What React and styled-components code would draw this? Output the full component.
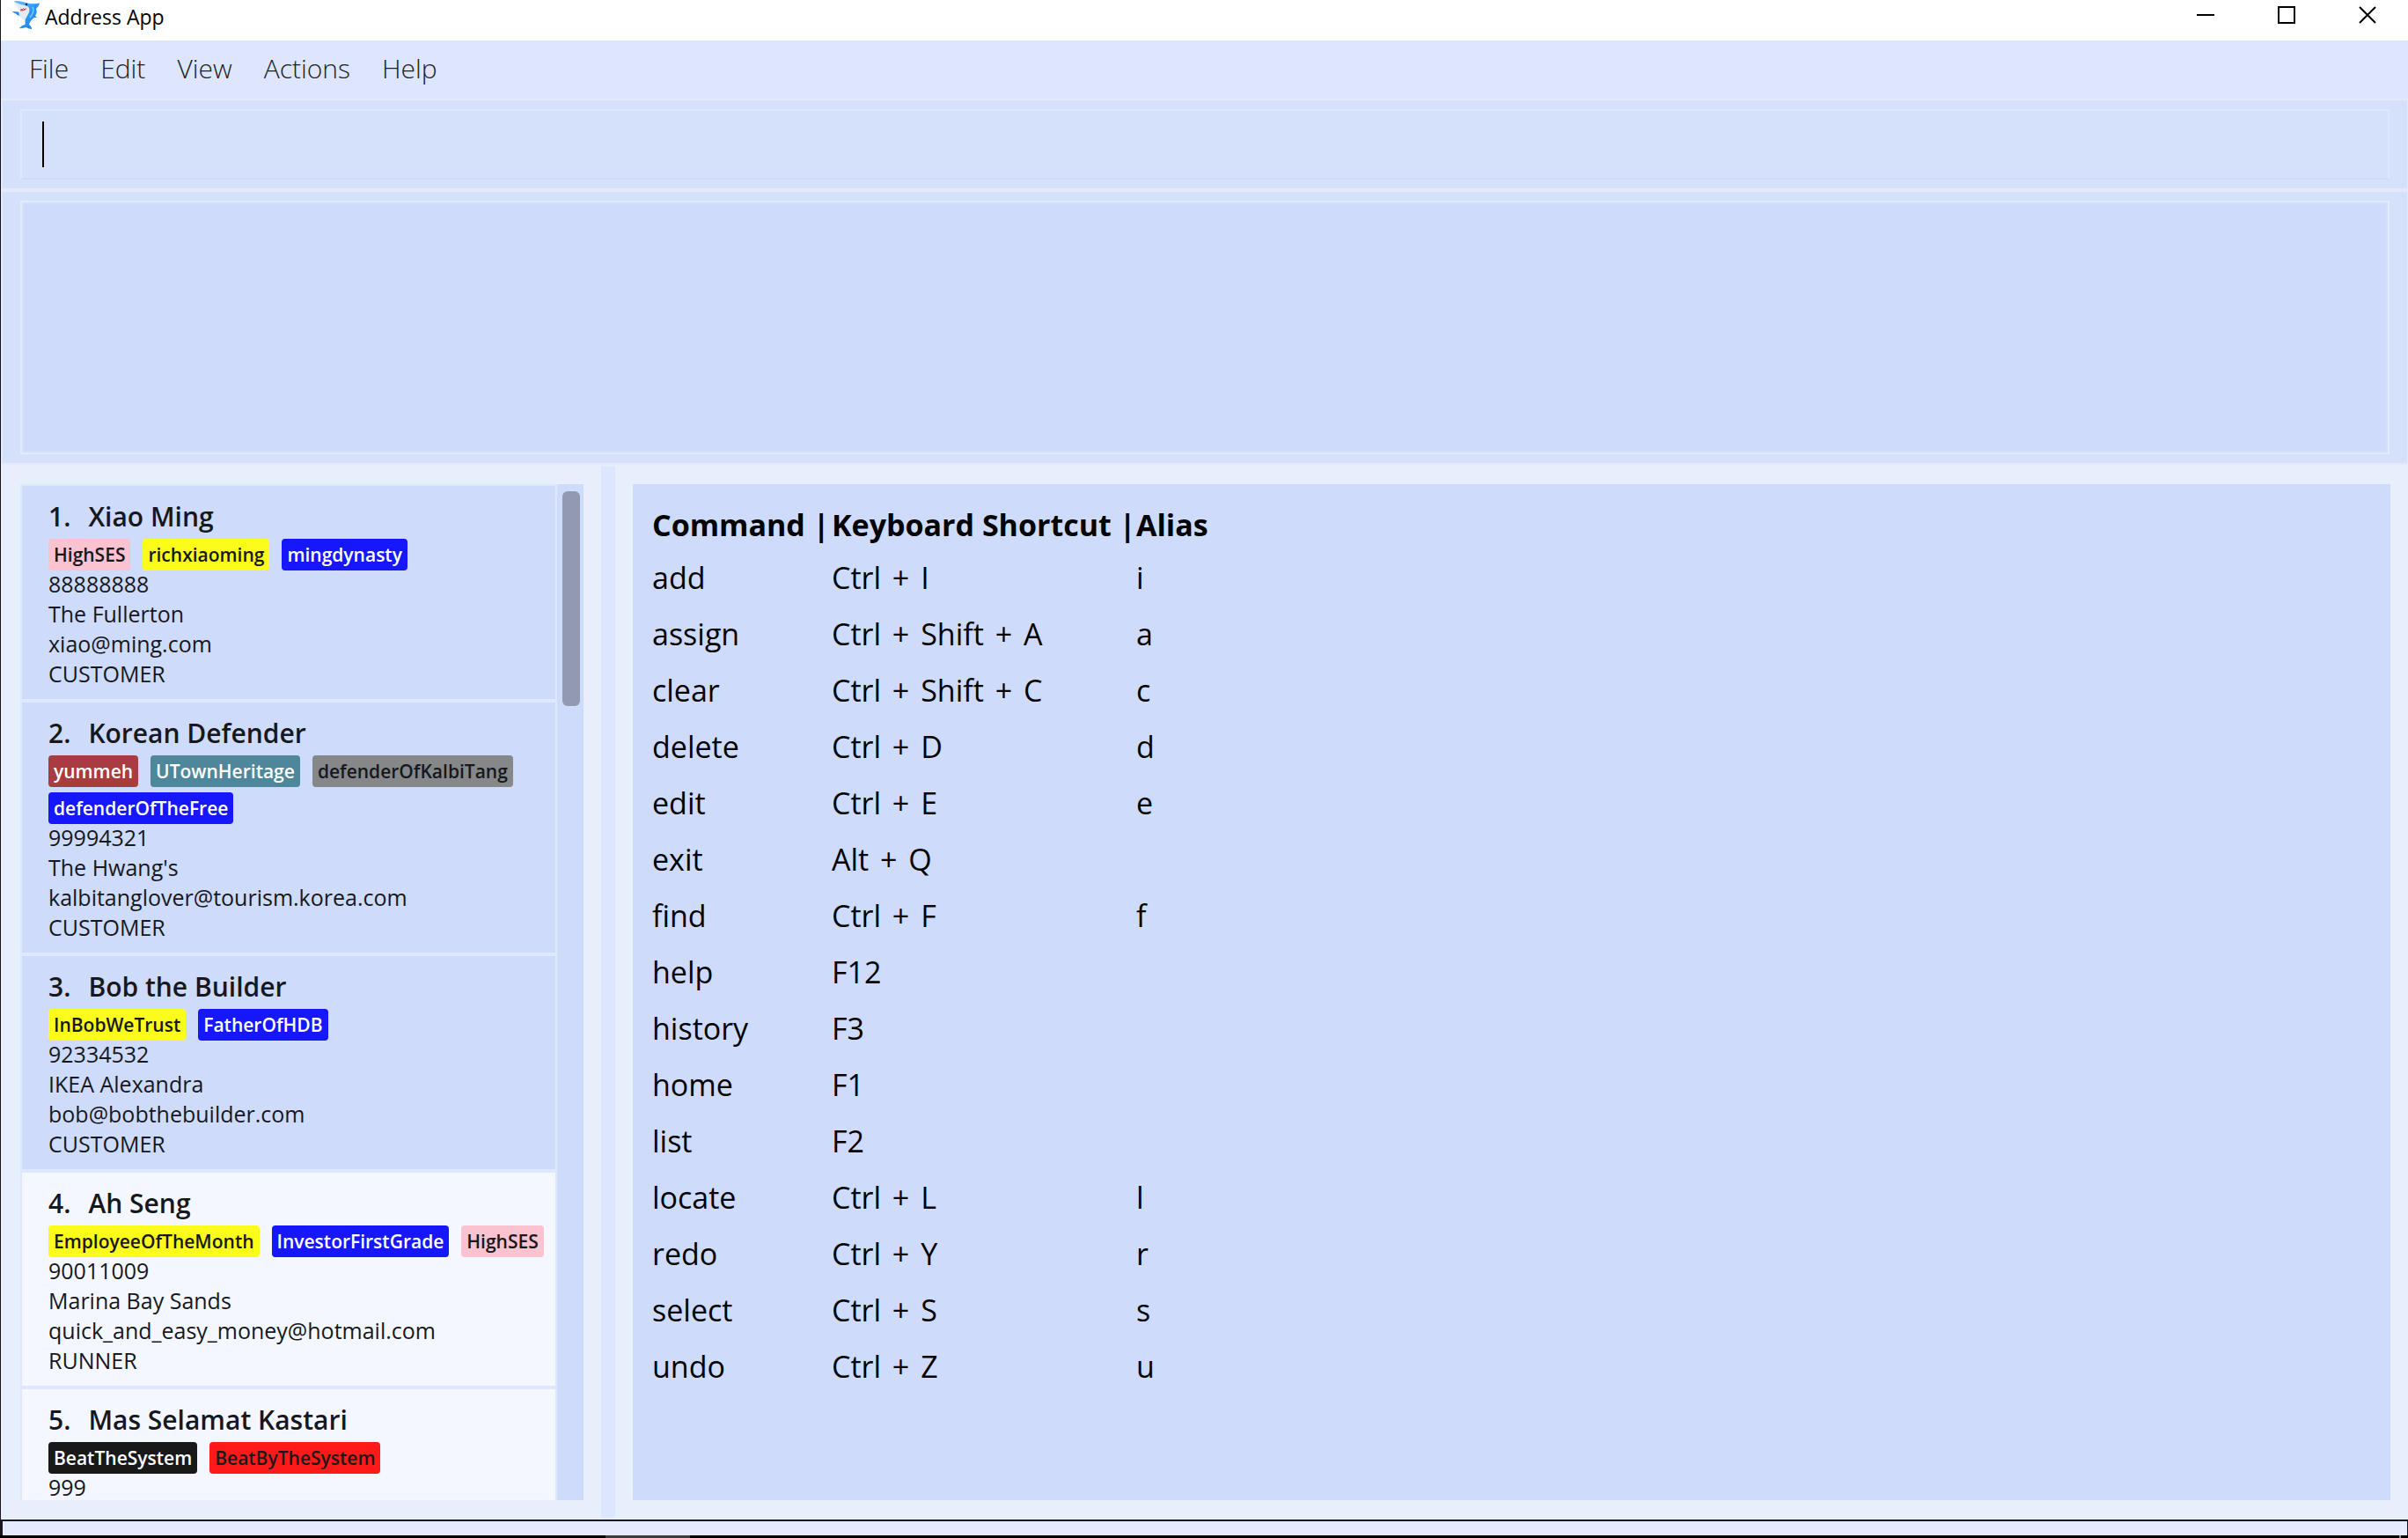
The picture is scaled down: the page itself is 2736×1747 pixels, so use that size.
import React from "react";
import styled, { createGlobalStyle } from "styled-components";

const GlobalStyle = createGlobalStyle`
  *, *::before, *::after { box-sizing: border-box; }
  body {
    margin: 0;
    font-family: "Open Sans", "Noto Sans", sans-serif;
    color: #16181d;
  }
`;

const Window = styled.div`
  display: flex;
  flex-direction: column;
  height: 100vh;
  overflow: hidden;
  background: #e7eefc;
`;

const Frame = styled.div`
  flex: 1;
  min-height: 0;
  display: flex;
  flex-direction: column;
  border-left: 1px solid #16161c;
`;

const TitleBar = styled.header`
  display: flex;
  align-items: flex-start;
  height: 46px;
  padding-left: 12px;
  background: #ffffff;
`;

const AppIcon = styled.svg`
  width: 36px;
  height: 34px;
  flex: none;
`;

const AppTitle = styled.h1`
  flex: 1;
  margin: 0;
  padding-left: 2px;
  font-size: 23px;
  font-weight: 400;
  line-height: 38px;
  color: #000000;
`;

const WindowButton = styled.button`
  width: 92px;
  height: 34px;
  display: flex;
  align-items: center;
  justify-content: center;
  padding: 0;
  border: 0;
  background: transparent;

  svg {
    width: 20px;
    height: 20px;
    fill: none;
    stroke: #000000;
    stroke-width: 2;
  }
`;

const MenuBar = styled.nav`
  display: flex;
  height: 66px;
  padding: 0 14px 2px;
  background: #dde5ff;
`;

const MenuButton = styled.button`
  padding: 0 18px;
  border: 0;
  background: transparent;
  font-family: inherit;
  font-size: 30px;
  font-weight: 300;
  line-height: 64px;
  color: #1c1e24;
`;

const Pane = styled.section`
  padding: 10px 20px;
  border: 2px solid #e2eafc;
  border-right-width: 1px;
  background: #d5e1fa;
`;

const CommandField = styled.label`
  display: flex;
  align-items: center;
  height: 80px;
  padding-left: 23px;
  border: 2px solid #dee7fd;
  border-bottom-color: #cfdbfa;
`;

const Caret = styled.span`
  width: 2px;
  height: 52px;
  background: #000000;
`;

const CommandInput = styled.input`
  flex: 1;
  min-width: 0;
  height: 52px;
  padding: 0;
  border: 0;
  outline: 0;
  background: transparent;
  font-family: inherit;
  font-size: 30px;
  color: #000000;
`;

const ResultDisplay = styled.output`
  display: block;
  height: 288px;
  border: 2px solid #e2eafc;
  background: #cedbfb;
  box-shadow: inset 0 0 0 2px #d3e0fb;
`;

const Main = styled.main`
  flex: 1;
  min-height: 0;
  display: flex;
  padding: 2px 20px 2px 22px;
`;

const ListPanel = styled.section`
  flex: none;
  width: 640px;
  margin: 20px 20px 20px 0;
  display: flex;
  background: #cedbfb;
`;

const PersonList = styled.ol`
  flex: 1;
  min-width: 0;
  margin: 0;
  padding: 0;
  list-style: none;
  overflow: hidden;
`;

const PersonCard = styled.li`
  padding: 10px 0 14px 30px;
  border: 2px solid #dee7fd;
  background: ${(p) => (p.$light ? "#f4f7ff" : "#cedbfb")};
`;

const PersonName = styled.h2`
  display: flex;
  gap: 20px;
  margin: 0;
  font-size: 30px;
  font-weight: 600;
  line-height: 50px;
`;

const Tags = styled.div`
  display: flex;
  flex-wrap: wrap;
  gap: 6px 14px;
`;

const Tag = styled.span`
  padding: 0 6px;
  border-radius: 4px;
  font-size: 21px;
  font-weight: 600;
  line-height: 36px;
  color: ${(p) => p.$ink};
  background: ${(p) => p.$fill};
`;

const Details = styled.div`
  margin: -2px 0;
`;

const Detail = styled.p`
  margin: 0;
  font-size: 25px;
  line-height: 34px;
`;

const ScrollTrack = styled.div`
  flex: none;
  width: 30px;
  padding: 8px 4px 8px 6px;
`;

const ScrollThumb = styled.div`
  height: 244px;
  border-radius: 6px;
  background: #9199b3;
`;

const Splitter = styled.div`
  flex: none;
  width: 16px;
  background: #dde6ff;
`;

const HelpPanel = styled.section`
  flex: 1;
  min-width: 0;
  margin: 20px 0 20px 20px;
  padding: 18px 22px;
  background: #cedbfb;
`;

const ShortcutTable = styled.table`
  border-collapse: collapse;
  font-size: 34px;
  color: #000000;

  th, td {
    padding: 0;
    text-align: left;
    white-space: nowrap;
  }
  th {
    height: 56px;
    font-weight: 700;
    line-height: 56px;
  }
  td {
    height: 64px;
    line-height: 64px;
  }
`;

const Column = styled.col`
  width: ${(p) => p.$width}px;
`;

const Plus = styled.span`
  margin: 0 4px;
`;

const StatusBar = styled.footer`
  height: 18px;
  border: 2px solid #16161c;
  border-width: 2px 1px 0 3px;
  background: #e4ebfc;
`;

const DesktopEdge = styled.div`
  display: flex;
  justify-content: space-between;
  height: 3px;
  padding: 0 8px 0 688px;
  background: #000000;
`;

const EdgeMark = styled.span`
  width: ${(p) => p.$width}px;
  background: ${(p) => p.$color};
`;

const tagColors = {
  pink: { fill: "#fbc2d0", ink: "#16181d" },
  yellow: { fill: "#fcfc1a", ink: "#16181d" },
  blue: { fill: "#1616ff", ink: "#ffffff" },
  brown: { fill: "#a93c40", ink: "#ffffff" },
  teal: { fill: "#4e879c", ink: "#ffffff" },
  gray: { fill: "#868789", ink: "#16181d" },
  black: { fill: "#191919", ink: "#ffffff" },
  red: { fill: "#ff1919", ink: "#191919" },
};

const people = [
  {
    name: "Xiao Ming",
    tags: [["HighSES", "pink"], ["richxiaoming", "yellow"], ["mingdynasty", "blue"]],
    details: ["88888888", "The Fullerton", "xiao@ming.com", "CUSTOMER"],
  },
  {
    name: "Korean Defender",
    tags: [
      ["yummeh", "brown"],
      ["UTownHeritage", "teal"],
      ["defenderOfKalbiTang", "gray"],
      ["defenderOfTheFree", "blue"],
    ],
    details: ["99994321", "The Hwang's", "kalbitanglover@tourism.korea.com", "CUSTOMER"],
  },
  {
    name: "Bob the Builder",
    tags: [["InBobWeTrust", "yellow"], ["FatherOfHDB", "blue"]],
    details: ["92334532", "IKEA Alexandra", "bob@bobthebuilder.com", "CUSTOMER"],
  },
  {
    name: "Ah Seng",
    light: true,
    tags: [["EmployeeOfTheMonth", "yellow"], ["InvestorFirstGrade", "blue"], ["HighSES", "pink"]],
    details: ["90011009", "Marina Bay Sands", "quick_and_easy_money@hotmail.com", "RUNNER"],
  },
  {
    name: "Mas Selamat Kastari",
    light: true,
    tags: [["BeatTheSystem", "black"], ["BeatByTheSystem", "red"]],
    details: ["999"],
  },
];

const shortcuts = [
  ["add", "Ctrl + I", "i"],
  ["assign", "Ctrl + Shift + A", "a"],
  ["clear", "Ctrl + Shift + C", "c"],
  ["delete", "Ctrl + D", "d"],
  ["edit", "Ctrl + E", "e"],
  ["exit", "Alt + Q", ""],
  ["find", "Ctrl + F", "f"],
  ["help", "F12", ""],
  ["history", "F3", ""],
  ["home", "F1", ""],
  ["list", "F2", ""],
  ["locate", "Ctrl + L", "l"],
  ["redo", "Ctrl + Y", "r"],
  ["select", "Ctrl + S", "s"],
  ["undo", "Ctrl + Z", "u"],
];

const SharkIcon = () => (
  <AppIcon viewBox="0 0 36 34" aria-hidden="true">
    <defs>
      <linearGradient id="sharkBody" x1="0" y1="0" x2="1" y2="1">
        <stop offset="0" stopColor="#6cc0fb" />
        <stop offset="0.5" stopColor="#2d97f3" />
        <stop offset="1" stopColor="#1a7be0" />
      </linearGradient>
    </defs>
    <path d="M1 13 L8 13.500 L13 18 C9 18.500 6 17 5 15.500 C3 15 2 14 1 13 Z" fill="#2a8ae6" />
    <path d="M3 1 C8 0.500 15 2 20 4 C24 4.500 29 4.500 32 3.500 C31.500 6 30 8 28 10 C29.500 13 28.500 16 27 18 L29 19.500 L25 20.500 C22.500 23 20.500 25 20 28 C22 29 23 31 23 33 C20 33 18 31.500 16 31 C14 32 12 32.500 9 32 C11 29.500 13 28.500 15.500 28 C16 24 15 20 15 17 Z" fill="url(#sharkBody)" />
    <path d="M3 1.500 C7 5 14 5 19 7.500 C21.500 11 20.500 14 18 18 L15 23.500 C10 20 7.500 16 8.500 11.500 C7 10 7 9 7.500 8 C5 6.500 3.500 4.500 3 1.500 Z" fill="#e4eaef" />
    <path d="M9 8.500 C12 9.500 15 9.500 17.500 8.500 C17 11 14 13 10 12.500 C11 11 10 9.500 9 8.500 Z" fill="#c9535c" />
    <path d="M9 8.500 L11 10 L12 9 L13.500 10.500 L15 9 L17 9" fill="none" stroke="#ffffff" strokeWidth="1" />
    <path d="M24 8 C26 11 25 15 21 20" fill="none" stroke="#7cc8fc" strokeWidth="1.500" />
    <circle cx="17" cy="5" r="1.200" fill="#10253d" />
  </AppIcon>
);

const ShortcutKeys = ({ keys }) =>
  keys.split(" + ").map((key, i) => (
    <React.Fragment key={key}>
      {i > 0 && (
        <>
          {" "}
          <Plus>+</Plus>{" "}
        </>
      )}
      {key}
    </React.Fragment>
  ));

const PersonEntry = ({ person, index }) => (
  <PersonCard $light={person.light}>
    <PersonName>
      <span>{index}.</span>
      <span>{person.name}</span>
    </PersonName>
    <Tags>
      {person.tags.map(([label, color]) => (
        <Tag key={label} $fill={tagColors[color].fill} $ink={tagColors[color].ink}>
          {label}
        </Tag>
      ))}
    </Tags>
    <Details>
      {person.details.map((line) => (
        <Detail key={line}>{line}</Detail>
      ))}
    </Details>
  </PersonCard>
);

export default function App() {
  return (
    <Window>
      <GlobalStyle />
      <Frame>
        <TitleBar>
          <SharkIcon />
          <AppTitle>Address App</AppTitle>
          <WindowButton aria-label="Minimize">
            <svg viewBox="0 0 20 20"><path d="M0 10h20" /></svg>
          </WindowButton>
          <WindowButton aria-label="Maximize">
            <svg viewBox="0 0 20 20"><rect x="1" y="1" width="18" height="18" /></svg>
          </WindowButton>
          <WindowButton aria-label="Close">
            <svg viewBox="0 0 20 20"><path d="M1 1l18 18M19 1L1 19" /></svg>
          </WindowButton>
        </TitleBar>
        <MenuBar>
          {["File", "Edit", "View", "Actions", "Help"].map((label) => (
            <MenuButton key={label}>{label}</MenuButton>
          ))}
        </MenuBar>
        <Pane>
          <CommandField>
            <Caret />
            <CommandInput type="text" aria-label="Command" />
          </CommandField>
        </Pane>
        <Pane>
          <ResultDisplay />
        </Pane>
        <Main>
          <ListPanel>
            <PersonList>
              {people.map((person, i) => (
                <PersonEntry key={person.name} person={person} index={i + 1} />
              ))}
            </PersonList>
            <ScrollTrack>
              <ScrollThumb />
            </ScrollTrack>
          </ListPanel>
          <Splitter />
          <HelpPanel>
            <ShortcutTable>
              <colgroup>
                <Column $width={204} />
                <Column $width={346} />
                <Column $width={100} />
              </colgroup>
              <thead>
                <tr>
                  <th>Command |</th>
                  <th>Keyboard Shortcut |</th>
                  <th>Alias</th>
                </tr>
              </thead>
              <tbody>
                {shortcuts.map(([command, keys, alias]) => (
                  <tr key={command}>
                    <td>{command}</td>
                    <td><ShortcutKeys keys={keys} /></td>
                    <td>{alias}</td>
                  </tr>
                ))}
              </tbody>
            </ShortcutTable>
          </HelpPanel>
        </Main>
      </Frame>
      <StatusBar />
      <DesktopEdge>
        <EdgeMark $width={96} $color="#3c3c3c" />
        <EdgeMark $width={2} $color="#8a8a8a" />
      </DesktopEdge>
    </Window>
  );
}
